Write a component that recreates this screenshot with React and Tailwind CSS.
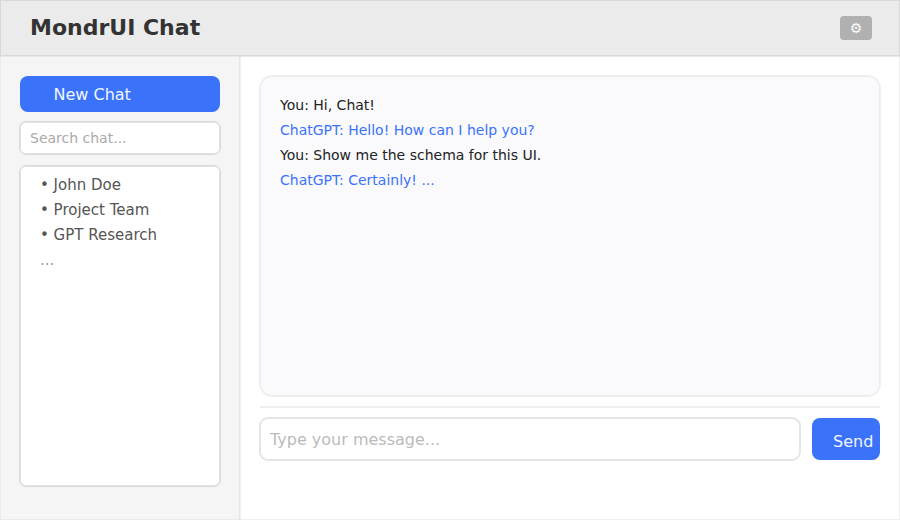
const chats = ["• John Doe", "• Project Team", "• GPT Research"];

const messages = [
  { id: 1, text: "You: Hi, Chat!", bot: false },
  { id: 2, text: "ChatGPT: Hello! How can I help you?", bot: true },
  { id: 3, text: "You: Show me the schema for this UI.", bot: false },
  { id: 4, text: "ChatGPT: Certainly! ...", bot: true },
];

function Header() {
  return (
    <header className="flex h-[57px] shrink-0 items-start justify-between border border-b-[#e8e8e8] border-t-[#d8d8d8] border-x-[#d8d8d8] bg-[#ebebeb] pr-[27px] pl-[29px] shadow-[inset_0_-1px_0_#d9d9d9]">
      <h1 className="pt-[11px] text-[22px] leading-8 font-bold text-[#333]">MondrUI Chat</h1>
      <button className="mt-[15px] flex h-6 w-8 justify-center rounded-[4px] bg-[#b0b0b0] text-sm leading-6 text-white">
        ⚙
      </button>
    </header>
  );
}

function Sidebar() {
  return (
    <aside className="flex w-[241px] shrink-0 flex-col border-r border-b border-l border-r-[#efefef] border-b-[#eaeaea] border-l-[#eaeaea] bg-[#f5f5f5] pt-[19px] pr-[19px] pl-[18px] shadow-[inset_-1px_0_0_#e5e5e5]">
      <button className="mx-px h-9 rounded-lg bg-[#3a73fa] pt-px pl-[33.5px] text-left text-base leading-[35px] text-[#f3f6ff]">
        New Chat
      </button>
      <div className="mt-[9px] h-[34px] rounded-[7px] border border-[#d9d9d9] bg-white pt-px pl-[10px] text-sm leading-[30px] text-[#aaa] shadow-[inset_0_0_0_1px_#e3e3e3]">
        Search chat...
      </div>
      <ul className="mt-[10px] h-[322px] rounded-[7px] border border-[#d9d9d9] bg-white pt-[7px] pl-[20px] text-[15px] leading-[25px] text-[#555] shadow-[inset_0_0_0_1px_#e3e3e3]">
        {chats.map((name) => (
          <li key={name}>{name}</li>
        ))}
        <li className="text-[#999]">...</li>
      </ul>
    </aside>
  );
}

function Conversation() {
  return (
    <main className="flex flex-1 flex-col border-r border-b border-[#eeeeee] bg-white pt-[18px] pr-[18px] pl-[18px]">
      <div className="h-[322px] rounded-[13px] border border-[#efeff0] bg-[#fafafc] pt-[17px] pl-[20px] text-sm leading-[25px] shadow-[inset_0_0_0_1px_#ececee]">
        {messages.map((m) => (
          <p key={m.id} className={m.bot ? "text-[#3a73fa]" : "text-[#222]"}>
            {m.text}
          </p>
        ))}
      </div>
      <div className="mx-px mt-[9px] h-0.5 bg-[#eeeeee]" />
      <div className="mt-[9px] flex items-center pr-px">
        <div className="h-11 w-[542px] rounded-[9px] border-2 border-[#e5e5e5] bg-white pt-px pl-[9px] text-base leading-10 text-[#bbb]">
          Type your message...
        </div>
        <button className="ml-[11px] h-[42px] flex-1 rounded-lg bg-[#3a73fa] pt-[5px] pl-[21px] text-left text-base leading-[37px] text-[#f3f6ff]">
          Send
        </button>
      </div>
    </main>
  );
}

export default function App() {
  return (
    <div className="flex h-[520px] w-[900px] flex-col overflow-hidden bg-white font-['DejaVu_Sans',sans-serif]">
      <Header />
      <div className="flex min-h-0 flex-1">
        <Sidebar />
        <Conversation />
      </div>
    </div>
  );
}
